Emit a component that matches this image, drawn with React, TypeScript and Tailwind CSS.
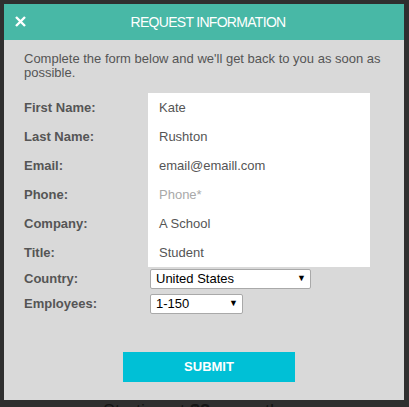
const rows = [
  { label: "First Name:", value: "Kate" },
  { label: "Last Name:", value: "Rushton" },
  { label: "Email:", value: "email@emaill.com" },
  { label: "Phone:", value: "Phone*", placeholder: true },
  { label: "Company:", value: "A School" },
  { label: "Title:", value: "Student" },
];

const Select = ({ value, width }: { value: string; width: string }) => (
  <div
    className={`flex h-[20px] items-center justify-between rounded-[2px] border border-[#a9a9a9] bg-white pl-[5px] pr-[4px] text-[13px] text-black ${width}`}
  >
    <span>{value}</span>
    <span className="text-[9px]">▼</span>
  </div>
);

export default function App() {
  return (
    <div className="relative h-[407px] w-[409px] overflow-hidden bg-[#2f2f2f] font-['Liberation_Sans',Arial,sans-serif]">
      <div className="mx-[4px] mt-[4px] flex h-[396px] w-[400px] flex-col bg-[#d9d9d9]">
        <div className="relative flex h-[36px] items-center justify-center bg-[#48b8a6] pl-[8px]">
          <svg
            className="absolute left-[11px] top-[12px]"
            width="11"
            height="11"
            viewBox="0 0 11 11"
          >
            <path d="M1 1L10 10M10 1L1 10" stroke="white" strokeWidth="2.4" />
          </svg>
          <h1 className="text-[14px] tracking-[-0.7px] text-white">REQUEST INFORMATION</h1>
        </div>

        <p className="px-[20px] pt-[12px] text-[13px] leading-[14px] text-[#555]">
          Complete the form below and we'll get back to you as soon as possible.
        </p>

        <div className="mt-[13px] flex px-[20px]">
          <div className="flex w-[124px] flex-col">
            {rows.map((r) => (
              <div
                key={r.label}
                className="flex h-[29px] items-center text-[13px] font-bold text-[#555]"
              >
                {r.label}
              </div>
            ))}
          </div>
          <div className="flex w-[222px] flex-col bg-white pl-[11px]">
            {rows.map((r) => (
              <div
                key={r.label}
                className={`flex h-[29px] items-center text-[13px] ${
                  r.placeholder ? "text-[#a9a9a9]" : "text-[#555]"
                }`}
              >
                {r.value}
              </div>
            ))}
          </div>
        </div>

        <div className="mt-[2px] flex items-center px-[20px]">
          <div className="w-[126px] text-[13px] font-bold text-[#555]">Country:</div>
          <Select value="United States" width="w-[161px]" />
        </div>
        <div className="mt-[5px] flex items-center px-[20px]">
          <div className="w-[126px] text-[13px] font-bold text-[#555]">Employees:</div>
          <Select value="1-150" width="w-[93px]" />
        </div>

        <div className="mt-[38px] flex">
          <button className="ml-[119px] h-[30px] w-[172px] bg-[#00c0d6] text-[13px] font-bold text-white">
            SUBMIT
          </button>
        </div>
      </div>
      <div className="ml-[103px] mt-[0px] text-[18px] leading-[22px] text-[#151515]">Starting at <b>$8</b> a month</div>
    </div>
  );
}
